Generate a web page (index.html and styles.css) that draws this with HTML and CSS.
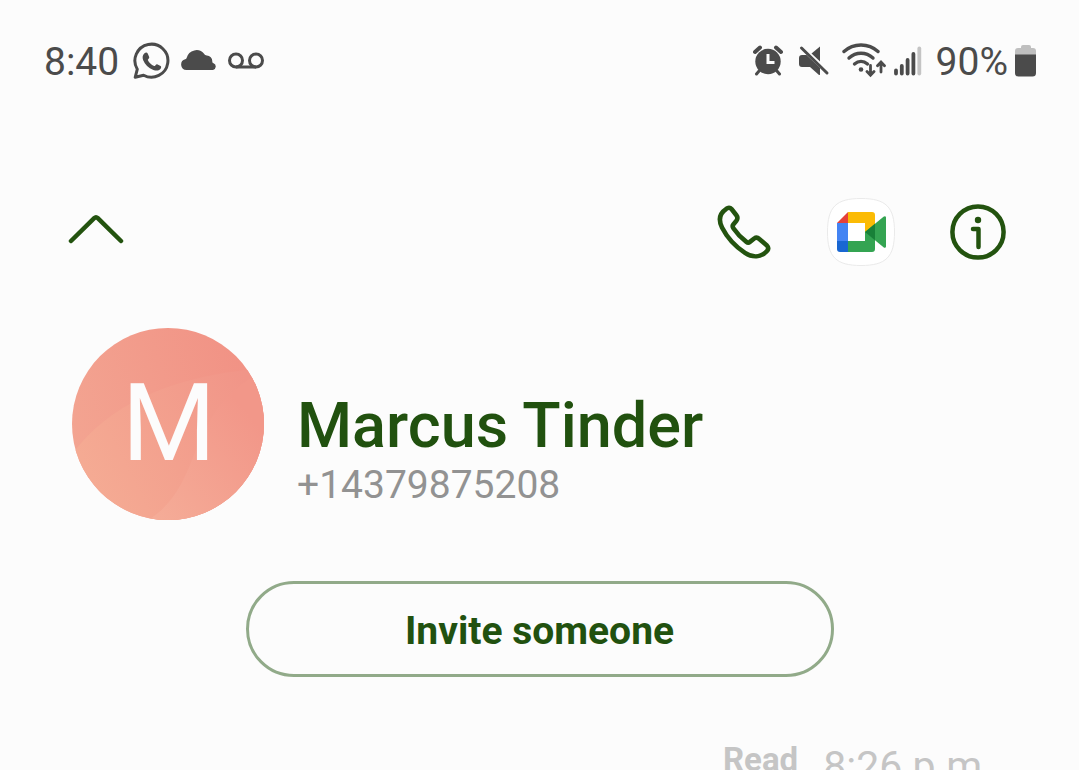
FILE: index.html
```html
<!DOCTYPE html>
<html lang="en">
<head>
<meta charset="utf-8">
<meta name="viewport" content="width=device-width, initial-scale=1">
<title>Marcus Tinder</title>
<link rel="stylesheet" href="styles.css">
</head>
<body>
<div class="page">
  <div class="status">
    <div class="status-left">
      <span class="status-text">8:40</span>
      <svg class="icon-whatsapp" width="40" height="40" viewBox="0 0 40 40" aria-hidden="true">
        <path d="M3.200 35.300l2.100-8.100a16.500 16.500 0 1 1 6.300 6z" fill="none" stroke="#4b4b4b" stroke-width="3" stroke-linejoin="round"/>
        <path d="M12.500 11.200c1.300-1.200 2.600-1 3.200.3l1.500 3.400c.5 1.200-1.600 2.300-1.400 3.200 1.300 2.700 3.500 4.800 6.300 6 .9.200 2-2.200 3-1.900l3.500 1.700c.9.500.6 2.300-.2 3.100-2 2-4.400 1.900-7 .9-5-1.900-8.500-5.400-10.200-9.700-1-2.700-.8-5.200 1.300-7z" fill="#4b4b4b"/>
      </svg>
      <svg class="icon-cloud" width="36" height="40" viewBox="0 0 36 40" aria-hidden="true">
        <path d="M5.500 28a5.500 5.500 0 0 1-1.300-10.800c1-.3 1.200-.4 1.500-1.400a10 10 0 0 1 17.600-3.800c.8 1.100 1.200 1.300 2.500 1.400a6 6 0 0 1 5.500 6.100c0 1 .3 1.300 1.300 1.700A3.600 3.600 0 0 1 32 28z" fill="#4b4b4b"/>
      </svg>
      <svg width="36" height="40" viewBox="0 0 36 40" aria-hidden="true" fill="none" stroke="#4b4b4b" stroke-width="3">
        <circle cx="8" cy="18.500" r="6.500"/><circle cx="28" cy="18.500" r="6.500"/><path d="M8 25h20"/>
      </svg>
    </div>
    <div class="status-right">
      <svg class="icon-alarm" width="30" height="40" viewBox="0 0 30 40" aria-hidden="true">
        <circle cx="15" cy="19.500" r="12.700" fill="#4b4b4b"/>
        <path d="M2 10l5-4.500M28 10l-5-4.500" stroke="#4b4b4b" stroke-width="4" stroke-linecap="round"/>
        <path d="M6.500 28.500l-3 3.500M23.500 28.500l3 3.500" stroke="#4b4b4b" stroke-width="3" stroke-linecap="round"/>
        <path d="M15 12v8.500h6.500" fill="none" stroke="#fcfcfc" stroke-width="3"/>
      </svg>
      <svg class="icon-mute" width="32" height="40" viewBox="0 0 32 40" aria-hidden="true">
        <path d="M22 4.500v15L13.500 11.500z" fill="#4b4b4b"/>
        <path d="M4 13h4.500L22 26v6.500a.6.600 0 0 1-1 .4L12 25H4a3 3 0 0 1-3-3v-6a3 3 0 0 1 3-3z" fill="#4b4b4b"/>
        <path d="M3.500 6l25.500 25" stroke="#4b4b4b" stroke-width="3" stroke-linecap="round"/>
      </svg>
      <svg class="icon-wifi" width="44" height="40" viewBox="0 0 44 40" aria-hidden="true" fill="none" stroke="#4b4b4b" stroke-width="3.400" stroke-linecap="round">
        <path d="M2 9.500C11.500.8 26.500.8 36 9.500"/>
        <path d="M7 16c7-6.400 17-6.400 24 0"/>
        <path d="M12.500 22c4-3.400 9-3.400 13 0"/>
        <circle cx="19" cy="27.500" r="2.300" fill="#4b4b4b" stroke="none"/>
        <path d="M28.500 23.500v9.500M25 29.500l3.500 3.700 3.500-3.700M39 30V20.500M35.500 23.700l3.500-3.700 3.500 3.700" stroke-width="2.800"/>
      </svg>
      <svg class="icon-signal" width="28" height="40" viewBox="0 0 28 40" aria-hidden="true" stroke="#4b4b4b" stroke-width="3.800" stroke-linecap="round">
        <path d="M2 28.500v3M7.800 24v7.500M13.600 18v13.500M19.400 12v19.500"/>
        <path d="M25.300 6.500v25" stroke="#c4c4c4"/>
      </svg>
      <span class="status-text">90%</span>
      <svg class="icon-battery" width="22" height="40" viewBox="0 0 22 40" aria-hidden="true">
        <path d="M0 13V9a3 3 0 0 1 3-3h3V5a2 2 0 0 1 2-2h6a2 2 0 0 1 2 2v1h2a3 3 0 0 1 3 3v4z" fill="#bfbfbf"/>
        <path d="M0 12.500h21V31a3.500 3.500 0 0 1-3.500 3.500h-14A3.500 3.500 0 0 1 0 31z" fill="#4b4b4b"/>
      </svg>
    </div>
  </div>

  <header class="toolbar">
    <button class="tool" type="button" aria-label="Collapse">
      <svg width="56" height="68" viewBox="0 0 56 68" fill="none" stroke="#23530f" stroke-width="4.500" stroke-linecap="round" stroke-linejoin="round"><path d="M3 43L26.200 20.200q1.800-1.800 3.600 0L53 43"/></svg>
    </button>
    <div class="tools">
      <button class="tool" type="button" aria-label="Call">
        <svg width="56" height="68" viewBox="0 0 56 68" fill="none" stroke="#23530f" stroke-width="4.600" stroke-linejoin="round"><path d="M10.300 10.800C12 9.400 14.100 9.400 15.500 11L20.400 17.200C22 19.300 21.900 20.600 20.400 22.800L17.300 26.500C16.300 27.700 16.400 28.700 17.400 30.200C20.900 35.400 25.700 40.300 30.400 43.900C31.700 44.900 32.700 44.900 33.900 43.900L38.200 40.500C40 39.200 41.400 39.200 43 40.700L50.900 47.500C52.500 49.200 52.600 51 51.200 52.800C45 59.600 36.500 59.800 29 54.800C20 49 11.200 39.700 6 29.500C2.500 22.300 3 15.700 10.300 10.800Z"/></svg>
      </button>
      <button class="tool" type="button" aria-label="Google Meet">
        <svg width="68" height="68" viewBox="0 0 68 68">
          <path d="M34 .5C59 .5 67.500 9 67.500 34S59 67.500 34 67.500.5 59 .5 34 9 .5 34 .5z" fill="#fff" stroke="#eaeaea"/>
          <path d="M10 25L21 14v11z" fill="#e5413a"/>
          <path d="M10 25h11v18H10z" fill="#4484f3"/>
          <path d="M10 43h11v11h-8a3 3 0 0 1-3-3z" fill="#1967d2"/>
          <path d="M21 14h24a3 3 0 0 1 3 3v17H38v-9H21z" fill="#fbbb05"/>
          <path d="M21 43h17v-9h10v17a3 3 0 0 1-3 3H21z" fill="#34a452"/>
          <path d="M38 34L56.500 18.800c1.300-1 2.500-.5 2.500 1v28.400c0 1.500-1.200 2-2.500 1z" fill="#34a452"/>
          <path d="M38 34l10-8.200v16.400z" fill="#188038"/>
        </svg>
      </button>
      <button class="tool" type="button" aria-label="Details">
        <svg width="56" height="68" viewBox="0 0 56 68" fill="none" stroke="#23530f" stroke-width="4.500" stroke-linecap="round" stroke-linejoin="round"><circle cx="28" cy="34" r="25.600"/><circle cx="28" cy="22" r="3.200" fill="#23530f" stroke="none"/><path d="M23 31h5.500v18"/></svg>
      </button>
    </div>
  </header>

  <section class="profile">
    <svg class="avatar" width="192" height="192" viewBox="0 0 192 192" role="img" aria-label="M">
      <defs>
        <linearGradient id="base" x1="0" y1="0.600" x2="1" y2="0.300"><stop offset="0" stop-color="#f3a491"/><stop offset="1" stop-color="#f19184"/></linearGradient>
        <linearGradient id="middle" x1="0" y1="0.700" x2="1" y2="0.300"><stop offset="0" stop-color="#f5ac94"/><stop offset="1" stop-color="#f19588"/></linearGradient>
        <linearGradient id="front" x1="0" y1="1" x2="0.800" y2="0.200"><stop offset="0" stop-color="#f5ad98"/><stop offset="1" stop-color="#f29789"/></linearGradient>
        <clipPath id="round"><circle cx="96" cy="96" r="96"/></clipPath>
      </defs>
      <g clip-path="url(#round)">
        <path d="M0 0h192v192H0z" fill="url(#base)"/>
        <path d="M0 126C38 76 98 48 192 40v152H0z" fill="url(#middle)"/>
        <path d="M76 192C132 158 112 90 182 48h10v144z" fill="url(#front)"/>
      </g>
      <text class="avatar-letter" x="97" y="132" text-anchor="middle">M</text>
    </svg>
    <div class="identity">
      <h1 class="name">Marcus Tinder</h1>
      <p class="number">+14379875208</p>
    </div>
  </section>

  <button class="invite" type="button">Invite someone</button>

  <div class="receipt">
    <span class="receipt-state">Read</span>
    <span class="receipt-time">8:26 p.m.</span>
  </div>
</div>
</body>
</html>
```
FILE: styles.css
```css
* { box-sizing: border-box; }

body {
  margin: 0;
  background: #fcfcfc;
  font-family: Roboto, "Noto Sans", sans-serif;
}

.page {
  height: 100vh;
  overflow: hidden;
  display: flex;
  flex-direction: column;
}

.page > * { flex-shrink: 0; }

svg { display: block; }

.status {
  display: flex;
  justify-content: space-between;
  padding: 42px 42px 0 44px;
}

.status-left, .status-right {
  display: flex;
  align-items: center;
}

.status-text {
  font-size: 39px;
  line-height: 40px;
  color: #4b4b4b;
}

.icon-whatsapp { margin-left: 13px; }
.icon-cloud { margin: 0 11px 0 9px; }
.icon-alarm { margin-right: 15px; }
.icon-mute { margin-right: 12px; }
.icon-wifi { margin-right: 8px; }
.icon-signal { margin-right: 14px; }
.icon-battery { margin-left: 7px; }

.toolbar {
  display: flex;
  justify-content: space-between;
  padding: 116px 73px 0 68px;
}

.tools {
  display: flex;
  gap: 55px;
}

.tool {
  padding: 0;
  border: 0;
  background: none;
  cursor: pointer;
}

.profile {
  display: flex;
  gap: 33px;
  padding: 62px 72px 0;
}

.avatar-letter {
  font-size: 108px;
  fill: #fcfcfc;
}

.identity { padding-top: 65px; }

.name {
  margin: 0;
  font-size: 63px;
  font-weight: 500;
  line-height: 66px;
  color: #21510f;
}

.number {
  margin: 0;
  font-size: 39px;
  line-height: 52px;
  color: #929292;
}

.invite {
  align-self: center;
  width: 588px;
  max-width: 90%;
  height: 96px;
  margin-top: 61px;
  padding: 4px 0 0;
  border: 3px solid #91aa89;
  border-radius: 48px;
  background: none;
  font: 700 39px Roboto, "Noto Sans", sans-serif;
  color: #21510f;
  cursor: pointer;
}

.receipt {
  display: flex;
  justify-content: flex-end;
  align-items: flex-start;
  gap: 25px;
  padding: 64px 86px 0 0;
  color: #c5c5c5;
}

.receipt-state {
  font-size: 33px;
  font-weight: 700;
  line-height: 38px;
}

.receipt-time {
  font-size: 41px;
  line-height: 50px;
}
```
